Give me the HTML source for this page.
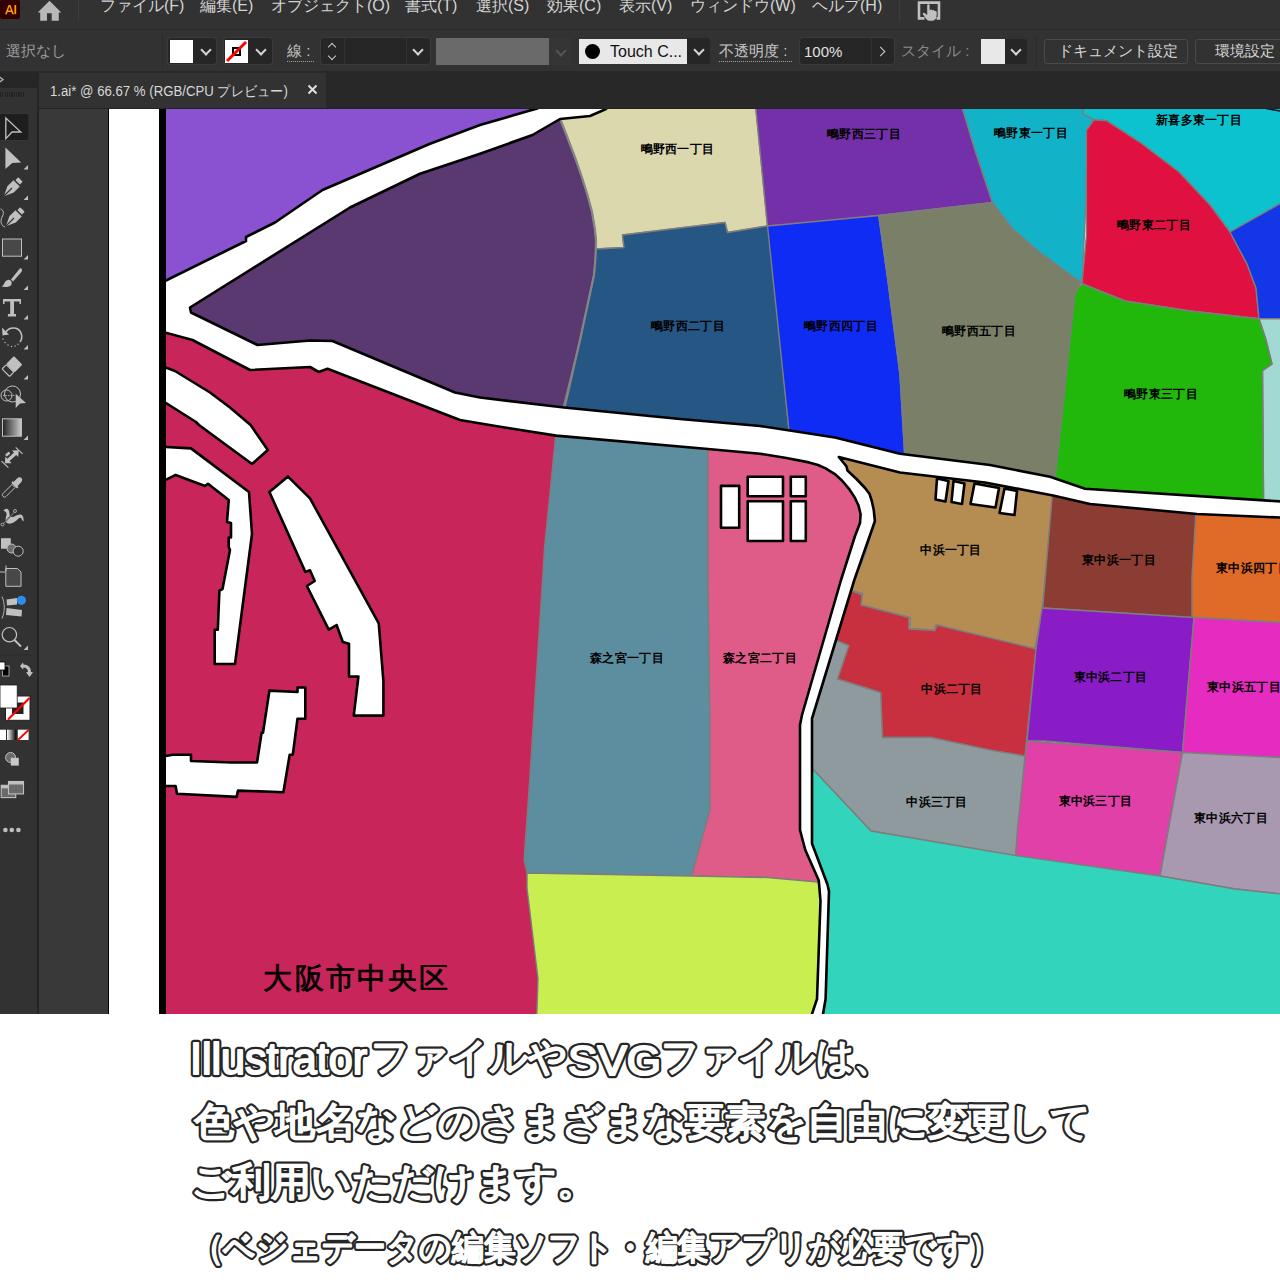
<!DOCTYPE html>
<html><head><meta charset="utf-8">
<style>
html,body{margin:0;padding:0;width:1280px;height:1280px;overflow:hidden;background:#fff;font-family:"Liberation Sans",sans-serif;}
.a{position:absolute}
.menu{position:absolute;top:-4px;font-size:16px;color:#d4d4d4;white-space:nowrap;line-height:20px}
.cb{position:absolute;font-size:15px;white-space:nowrap;line-height:18px}
.dd{position:absolute;background:#262626;border-radius:3px}
.chev{position:absolute;width:6px;height:6px;border-right:2px solid #d4d4d4;border-bottom:2px solid #d4d4d4;transform:rotate(45deg);margin-top:0.5px}
</style></head><body>
<!-- UI background -->
<div class="a" style="left:0;top:0;width:1280px;height:1014px;background:#393939"></div>
<!-- menu bar -->
<div class="a" style="left:0;top:0;width:1280px;height:29px;background:#323232"></div>
<div class="a" style="left:0;top:29px;width:1280px;height:1px;background:#2a2a2a"></div>
<!-- control bar -->
<div class="a" style="left:0;top:30px;width:1280px;height:41px;background:#323232"></div>
<div class="a" style="left:0;top:71px;width:1280px;height:2px;background:#282828"></div>
<!-- tab bar -->
<div class="a" style="left:0;top:73px;width:1280px;height:35px;background:#282828"></div>
<!-- MENUBAR_CONTENT -->
<!-- Ai logo -->
<div class="a" style="left:0;top:0;width:20px;height:19px;background:#330000;border-radius:2px"></div>
<svg class="a" style="left:0;top:0" width="20" height="19" viewBox="0 0 20 19"><path d="M5 14.2 L8.6 4.9 L10.4 4.9 L14 14.2 L12.2 14.2 L11.4 12 L7.6 12 L6.8 14.2 Z M8.1 10.4 L10.9 10.4 L9.5 6.6 Z" fill="#ff9a00"/><rect x="14.4" y="5" width="1.8" height="9.2" fill="#ff9a00"/></svg>
<!-- home -->
<svg class="a" style="left:0;top:0" width="70" height="24" viewBox="0 0 70 24"><path d="M37.7 12.6 L49.5 0.8 L61.3 12.6 L58.8 12.6 L58.8 20.8 L51.7 20.8 L51.7 13.2 L47 13.2 L47 20.8 L40.2 20.8 L40.2 12.6 Z" fill="#b8b8b8"/></svg>
<div class="a" style="left:78px;top:0;width:1px;height:21px;background:#3c3c3c"></div>
<div class="menu" style="left:100px">ファイル(F)</div>
<div class="menu" style="left:200px">編集(E)</div>
<div class="menu" style="left:271px">オブジェクト(O)</div>
<div class="menu" style="left:405px">書式(T)</div>
<div class="menu" style="left:476px">選択(S)</div>
<div class="menu" style="left:547px">効果(C)</div>
<div class="menu" style="left:619px">表示(V)</div>
<div class="menu" style="left:690px">ウィンドウ(W)</div>
<div class="menu" style="left:812px">ヘルプ(H)</div>
<div class="a" style="left:899px;top:0;width:1px;height:21px;background:#3c3c3c"></div>
<svg class="a" style="left:916px;top:0" width="26" height="24" viewBox="916 0 26 24"><path d="M924.5 18.4 L919 18.4 L919 2.6 L939 2.6 L939 18.4 L936.5 18.4" fill="none" stroke="#c0c0c0" stroke-width="2.6"/>
<path d="M927.2 5.2 C927.2 3.8 929.6 3.8 929.6 5.2 L929.6 10.5 C930.5 9 932 9.3 932.2 10.5 C933 9.5 934.5 10 934.6 11.2 C935.5 10.6 936.8 11.2 936.8 12.5 L936.5 16.5 C936.2 19 934.5 20.8 932 20.8 L929.5 20.8 C927.5 20.8 926.5 19.5 925.5 18 L922.8 14.2 C922.2 13.2 923.5 12.2 924.5 13 L927.2 15 Z" fill="#c0c0c0"/></svg>
<!-- /MENUBAR_CONTENT -->
<!-- CONTROLBAR_CONTENT -->
<div class="cb" style="left:6px;top:42px;color:#9c9c9c">選択なし</div>
<div class="a" style="left:162px;top:35px;width:1px;height:32px;background:#2a2a2a"></div>
<!-- fill -->
<div class="a" style="left:168px;top:38px;width:48px;height:26px;border-radius:3px;background:#262626;box-shadow:0 0 0 1px #3a3a3a"></div>
<div class="a" style="left:170px;top:40px;width:23px;height:23px;background:#fff"></div>
<div class="chev" style="left:202px;top:45px"></div>
<!-- stroke -->
<div class="a" style="left:224px;top:38px;width:48px;height:26px;border-radius:3px;background:#262626;box-shadow:0 0 0 1px #3a3a3a"></div>
<div class="a" style="left:225px;top:40px;width:23px;height:23px;background:#fff"></div>
<svg class="a" style="left:225px;top:40px" width="23" height="23"><rect x="8" y="8" width="7" height="7" fill="none" stroke="#000" stroke-width="2"/><line x1="2" y1="21" x2="21" y2="2" stroke="#f00" stroke-width="3"/></svg>
<div class="chev" style="left:257px;top:45px"></div>
<div class="cb" style="left:287px;top:42px;color:#c8c8c8">線 :</div>
<div class="a" style="left:287px;top:61px;width:27px;height:0;border-top:1.5px dotted #a0a0a0"></div>
<!-- stepper -->
<div class="a" style="left:321px;top:38px;width:109px;height:26px;border-radius:3px;background:#262626;box-shadow:0 0 0 1px #3a3a3a"></div>
<div class="a" style="left:344px;top:38px;width:1px;height:26px;background:#323232"></div>
<div class="a" style="left:406px;top:38px;width:1px;height:26px;background:#323232"></div>
<div class="a" style="left:329px;top:44px;width:5px;height:5px;border-left:1.5px solid #ccc;border-top:1.5px solid #ccc;transform:rotate(45deg)"></div>
<div class="a" style="left:329px;top:53px;width:5px;height:5px;border-right:1.5px solid #ccc;border-bottom:1.5px solid #ccc;transform:rotate(45deg)"></div>
<div class="chev" style="left:414px;top:45px"></div>
<!-- gray bar -->
<div class="a" style="left:436px;top:38px;width:113px;height:27px;background:#6a6a6a"></div>
<div class="a" style="left:549px;top:38px;width:22px;height:27px;background:#353535"></div>
<div class="chev" style="left:557px;top:46px;border-color:#555"></div>
<!-- touch -->
<div class="a" style="left:579px;top:39px;width:108px;height:25px;background:#e8e8e8"></div>
<div class="a" style="left:585px;top:44px;width:15px;height:15px;border-radius:50%;background:#000"></div>
<div class="cb" style="left:610px;top:43px;color:#111;font-size:16px">Touch C...</div>
<div class="a" style="left:687px;top:38px;width:23px;height:26px;background:#262626;border-radius:0 3px 3px 0"></div>
<div class="chev" style="left:695px;top:45px"></div>
<div class="cb" style="left:719px;top:42px;color:#c8c8c8">不透明度 :</div>
<div class="a" style="left:719px;top:61px;width:73px;height:0;border-top:1.5px dotted #a0a0a0"></div>
<!-- 100% -->
<div class="a" style="left:800px;top:38px;width:94px;height:26px;border-radius:3px;background:#262626;box-shadow:0 0 0 1px #3a3a3a"></div>
<div class="a" style="left:871px;top:38px;width:1px;height:26px;background:#323232"></div>
<div class="cb" style="left:804px;top:43px;color:#e0e0e0">100%</div>
<div class="a" style="left:877px;top:48px;width:6px;height:6px;border-right:1.6px solid #d0d0d0;border-top:1.6px solid #d0d0d0;transform:rotate(45deg)"></div>
<div class="cb" style="left:901px;top:42px;color:#8a8a8a">スタイル :</div>
<div class="a" style="left:981px;top:39px;width:46px;height:25px;border-radius:3px;background:#262626"></div>
<div class="a" style="left:981px;top:39px;width:24px;height:25px;background:#e8e8e8"></div>
<div class="chev" style="left:1012px;top:45px"></div>
<div class="a" style="left:1036px;top:35px;width:1px;height:32px;background:#2a2a2a"></div>
<!-- buttons -->
<div class="a" style="left:1044px;top:39px;width:142px;height:23px;border:1px solid #4a4a4a;border-radius:3px"></div>
<div class="cb" style="left:1058px;top:42px;color:#d8d8d8">ドキュメント設定</div>
<div class="a" style="left:1195px;top:39px;width:100px;height:23px;border:1px solid #4a4a4a;border-radius:3px"></div>
<div class="cb" style="left:1215px;top:42px;color:#d8d8d8">環境設定</div>
<!-- /CONTROLBAR_CONTENT -->
<!-- TABBAR_CONTENT -->
<div class="a" style="left:0;top:73px;width:37px;height:15px;background:#262626"></div>
<div class="a" style="left:0;top:88px;width:37px;height:21px;background:#323232"></div>
<div class="a" style="left:37px;top:73px;width:2px;height:36px;background:#262626"></div>
<svg class="a" style="left:0;top:76px" width="5" height="7"><path d="M-1 0.5 L3 3.5 L-1 6.5" fill="none" stroke="#b0b0b0" stroke-width="1.4"/></svg>
<div class="a" style="left:0;top:92px;width:24px;height:5px;background:repeating-linear-gradient(90deg,#222 0 1.2px,transparent 1.2px 2.3px)"></div>
<div class="a" style="left:39px;top:73px;width:287px;height:35px;background:#323232"></div>
<div class="a" style="left:39px;top:108px;width:1241px;height:1px;background:#232323"></div>
<div class="a" style="left:50px;top:82px;font-size:14px;color:#d8d8d8;line-height:18px;white-space:nowrap;transform:scaleX(0.943);transform-origin:0 0">1.ai* @ 66.67 % (RGB/CPU プレビュー)</div>
<svg class="a" style="left:307px;top:84px" width="11" height="11"><path d="M1.5 1.5 L9.5 9.5 M9.5 1.5 L1.5 9.5" stroke="#e0e0e0" stroke-width="2"/></svg>
<!-- /TABBAR_CONTENT -->
<!-- CANVAS -->
<div class="a" style="left:0;top:108px;width:37px;height:906px;background:#323232"></div>
<div class="a" style="left:37px;top:108px;width:2px;height:906px;background:#242424"></div>
<div class="a" style="left:39px;top:109px;width:69px;height:905px;background:#393939"></div>
<div class="a" style="left:108px;top:109px;width:1px;height:905px;background:#000"></div>
<div class="a" style="left:109px;top:109px;width:49.5px;height:905px;background:#fff"></div>
<div class="a" style="left:158.5px;top:109px;width:7.5px;height:905px;background:#000"></div>
<!-- TOOLBAR_CONTENT -->
<svg class="a" style="left:0;top:108px" width="37" height="740" viewBox="0 108 37 740">
<g fill="#c0c0c0" stroke="none">
<!-- selected bg -->
<rect x="-3" y="113.5" width="32" height="27" rx="2.5" fill="#1e1e1e" stroke="#3a3a3a" stroke-width="0.8"/>
<!-- selection outline arrow -->
<path d="M5.8 118 L20.8 132 L12 132 L5.8 138.6 Z" fill="none" stroke="#c0c0c0" stroke-width="1.3" stroke-linejoin="miter"/>
<!-- direct selection -->
<path d="M5.4 147.4 L21.2 162.6 L12.3 163 L5.4 169 Z"/>
<path d="M23.6 169.5 L28 165 L28 169.5 Z"/>
<!-- pen -->
<g transform="rotate(45 12 188)">
<rect x="8.8" y="176" width="6.4" height="4" rx="0.8"/>
<path d="M7.5 181.5 L16.5 181.5 L16.5 190 L12 199.5 L7.5 190 Z"/>
<path d="M12 188 L12 199" stroke="#323232" stroke-width="1.2"/>
</g>
<path d="M23.6 200 L28 195.6 L28 200 Z"/>
<!-- curvature pen -->
<g transform="rotate(45 14 218)">
<rect x="10.8" y="206" width="6.4" height="4" rx="0.8"/>
<path d="M9.5 211.5 L18.5 211.5 L18.5 220 L14 229.5 L9.5 220 Z"/>
<path d="M14 218 L14 229" stroke="#323232" stroke-width="1.2"/>
</g>
<path d="M0.5 209 C4 210 4 214 2 217 C0 221 1 226 5 227" fill="none" stroke="#c0c0c0" stroke-width="1"/>
<!-- rect -->
<rect x="2.5" y="239" width="19" height="17.2" fill="#484848" stroke="#c0c0c0" stroke-width="1"/>
<path d="M23.6 259.5 L28 255 L28 259.5 Z"/>
<!-- brush -->
<path d="M21.2 268.5 C22.5 269.5 22.2 271 21 272.5 L13 281.5 L11 279.5 L19 269.5 C19.7 268.6 20.5 268 21.2 268.5 Z"/>
<path d="M10.3 280.2 C12.5 282 12.2 285.5 9 286.5 C6 287.3 3 287 1.5 286.6 C3.5 285.5 4 283.5 5 282 C6.3 280 8.5 279 10.3 280.2 Z"/>
<path d="M23.6 290 L28 285.6 L28 290 Z"/>
<!-- type -->
<path d="M3 299 L21 299 L21 304 L19.5 304 L19.5 301.5 L14 301.5 L14 314 L16 314 L16 316.6 L7.9 316.6 L7.9 314 L10.2 314 L10.2 301.5 L4.5 301.5 L4.5 304 L3 304 Z"/>
<path d="M23.6 319.5 L28 315 L28 319.5 Z"/>
<!-- rotate -->
<path d="M6 332 C9 327 18 326 21 333 C22.5 337 21.5 340 20 342" fill="none" stroke="#c0c0c0" stroke-width="1.6"/>
<path d="M2 327.5 L9 334.5 L2.5 335.5 Z"/>
<g fill="#c0c0c0"><circle cx="3" cy="339" r="0.7"/><circle cx="5" cy="342.5" r="0.7"/><circle cx="8" cy="345" r="0.7"/><circle cx="11.5" cy="346.5" r="0.7"/><circle cx="15" cy="346" r="0.7"/><circle cx="18" cy="344.3" r="0.7"/></g>
<path d="M23.6 349.5 L28 345 L28 349.5 Z"/>
<!-- eraser -->
<g transform="rotate(45 12.5 366)">
<rect x="6.5" y="358" width="12" height="11" rx="1"/>
<rect x="7.2" y="369.5" width="10.6" height="6" rx="1" fill="none" stroke="#c0c0c0" stroke-width="1.2"/>
</g>
<path d="M23.6 379.5 L28 375 L28 379.5 Z"/>
<!-- shape builder -->
<circle cx="6.5" cy="395.5" r="5.5" fill="none" stroke="#c0c0c0" stroke-width="1"/>
<circle cx="12.5" cy="394" r="8" fill="none" stroke="#c0c0c0" stroke-width="1"/>
<path d="M3 395.5 L15 395.5" stroke="#c0c0c0" stroke-width="0.8" stroke-dasharray="1.5 1"/>
<path d="M15.7 393.8 L26 403 L20 403.5 L15.7 408 Z"/>
<!-- gradient -->
<defs><linearGradient id="tg" x1="0" x2="1"><stop offset="0" stop-color="#222"/><stop offset="1" stop-color="#ccc"/></linearGradient>
<linearGradient id="tg2" x1="0" x2="1"><stop offset="0" stop-color="#fff"/><stop offset="1" stop-color="#000"/></linearGradient></defs>
<rect x="2.5" y="418.8" width="19" height="17.4" fill="url(#tg)" stroke="#c0c0c0" stroke-width="1"/>
<path d="M23.6 440 L28 435.5 L28 440 Z"/>
<!-- measure -->
<path d="M1.5 461.2 L8.4 467.6 M15.7 447.4 L22.6 453.8" stroke="#c0c0c0" stroke-width="1.1"/>
<g transform="rotate(-43 11.8 456.8)">
<path d="M2.3 456.8 L7.3 452.3 L7.3 455.2 L16.3 455.2 L16.3 452.3 L21.3 456.8 L16.3 461.3 L16.3 458.4 L7.3 458.4 L7.3 461.3 Z"/>
</g>
<rect x="5.2" y="452.8" width="5" height="2.6" rx="1" transform="rotate(-40 7.7 454.1)"/>
<!-- eyedropper -->
<path d="M4 497 C2 496 2 494.5 3 493.5 L12 484.5 L15 487.5 L6 496.5 C5.5 497 4.8 497.4 4 497 Z" fill="none" stroke="#c0c0c0" stroke-width="1"/>
<path d="M11.5 483 L17 488.5 L18.5 487 L17.5 486 L21 482.5 C22.5 481 22.5 479 21.5 478 C20.5 477 18.5 477 17 478.5 L13.5 482 L12.5 481 Z"/>
<!-- blend/puppet -->
<path d="M3.5 511 C5 508 8 508 9 511 C10 514 9 517 12 517 C15 517 17 514 20.5 514.5 C23 515 24 518 23.5 521.5 L22 520 C21.5 517 19.5 517.5 18 519 C15 522.5 10 525 7 523 C4.5 521.5 6 517 6.5 515 C7 513 5.5 511 3.5 511 Z"/>
<path d="M2.5 524.5 L15 511.5" stroke="#323232" stroke-width="1.2"/>
<path d="M2.5 524.5 L15 511.5" stroke="#c0c0c0" stroke-width="0.6"/>
<circle cx="2.5" cy="524.5" r="1.5" fill="#323232" stroke="#c0c0c0" stroke-width="0.8"/>
<circle cx="15" cy="511" r="1.5" fill="#323232" stroke="#c0c0c0" stroke-width="0.8"/>
<!-- shapes -->
<rect x="1" y="538.2" width="9.8" height="10.5"/>
<circle cx="11.5" cy="548.5" r="4.5" fill="#6f6f6f" stroke="#c0c0c0" stroke-width="1"/>
<circle cx="18.2" cy="551.2" r="5" fill="#323232" stroke="#c0c0c0" stroke-width="1"/>
<!-- artboard -->
<path d="M5.8 568.5 L17.5 568.5 L21 572 L21 586.3 L5.8 586.3 Z" fill="#484848" stroke="#c0c0c0" stroke-width="1"/>
<path d="M6 565.5 L6 571 M0 572 L5 572" stroke="#c0c0c0" stroke-width="1"/>
<!-- puppet warp -->
<path d="M2 596.5 C5 603 5 612 2 618.5" fill="none" stroke="#c0c0c0" stroke-width="0.9"/>
<path d="M6.5 599.5 L17 598 L17 604.5 L7 605.5 Z"/>
<path d="M6.5 608 L22 610 L21.5 616.5 L6 615 Z"/>
<circle cx="21.4" cy="600.3" r="4.6" fill="#2d8ceb"/>
<!-- zoom -->
<circle cx="9.4" cy="634.7" r="7.2" fill="none" stroke="#c0c0c0" stroke-width="1.2"/>
<path d="M14.5 640 L21 646.5" stroke="#c0c0c0" stroke-width="2"/>
<path d="M23.6 650 L28 645.5 L28 650 Z"/>
<rect x="0" y="654.5" width="31" height="0.8" fill="#2a2a2a"/>
<!-- default colors -->
<rect x="2.5" y="666" width="6.5" height="10" fill="#000" stroke="#c0c0c0" stroke-width="0.8"/>
<rect x="-1" y="662" width="6" height="8" fill="#fff" stroke="#000" stroke-width="0.8"/>
<!-- swap arrow -->
<path d="M20 666 L23 662.5 L23.5 664.5 C28 664.5 31 667.5 31 672 L33 672.3 L29.5 677 L26 672.3 L28 672 C28 669 26 667.5 23.5 667.5 L23 669.5 Z"/>
<!-- fill/stroke swatches -->
<rect x="5.5" y="696" width="24.5" height="24.3" fill="#fff" stroke="#1e1e1e" stroke-width="1"/>
<rect x="12" y="702.5" width="11.5" height="11.5" fill="#222"/>
<rect x="0" y="685" width="17.2" height="23" fill="#fff" stroke="#1e1e1e" stroke-width="0.8"/>
<path d="M8 719.5 L29.5 698" stroke="#f00" stroke-width="2.2"/>
<!-- color modes -->
<rect x="0" y="729.7" width="6" height="10.3" fill="#fff"/>
<rect x="7" y="729.7" width="9.3" height="10.3" fill="url(#tg2)"/>
<rect x="17.8" y="729.7" width="10.8" height="10.3" fill="#fff"/>
<path d="M18 740 L28.5 730" stroke="#f00" stroke-width="1.8"/>
<!-- draw modes -->
<circle cx="10.6" cy="757.5" r="5" fill="#6a6a6a" stroke="#c0c0c0" stroke-width="1"/>
<rect x="10.8" y="757.8" width="8" height="7.8" fill="#c8c8c8"/>
<!-- screen mode -->
<rect x="1.2" y="785.3" width="14.5" height="12.3" fill="#6a6a6a" stroke="#c0c0c0" stroke-width="1.1"/>
<rect x="1.2" y="785.3" width="14.5" height="3" fill="#c0c0c0"/>
<rect x="8.5" y="781.5" width="15" height="12.4" fill="#6a6a6a" stroke="#c0c0c0" stroke-width="1.1"/>
<rect x="8.5" y="781.5" width="15" height="3" fill="#c0c0c0"/>
<!-- more -->
<circle cx="5.4" cy="830" r="2.3"/><circle cx="11.8" cy="830" r="2.3"/><circle cx="18.4" cy="830" r="2.3"/>
</g>
</svg>
<!-- /TOOLBAR_CONTENT -->
<!-- MAP -->
<svg class="a" style="left:0;top:0" width="1280" height="1014" viewBox="0 0 1280 1014">
<defs><clipPath id="mc"><rect x="166" y="109" width="1114" height="905"/></clipPath></defs>
<g clip-path="url(#mc)">
<rect x="166" y="109" width="1114" height="905" fill="#fff"/>
<g stroke="#7d7d7d" stroke-width="1.4" stroke-linejoin="round">
<!-- purple TL -->
<polygon fill="#8a52d0" stroke="none" points="160,100 560,100 165,300"/>
<!-- dark purple -->
<polygon fill="#5a3870" points="185,310 350,207 420,173 480,153 532,135 561,119 561,121 568,139 575,157.5 581.5,176 587.5,195 592,212 595,230 596,240 595.5,258 594,275 580,340 564,410 455,395 332,343 257,350"/>
<!-- beige -->
<polygon fill="#dcd8ae" points="561,100 755,100 767.5,226 727.5,232.5 725,222.5 622.5,235 624,247.5 596,249 596,240 595,230 592,212 587.5,195 581.5,176 575,157.5 568,139 561,121"/>
<!-- dark blue -->
<polygon fill="#265684" points="596,249 624,247.5 622.5,235 725,222.5 727.5,232.5 767.5,226 769,226 790,440 560,420 580,340 594,275"/>
<!-- purple 西三 -->
<polygon fill="#7430a8" points="755,100 960,100 975,150 992.5,202.5 878.75,215.5 800,223.75 767.5,226"/>
<!-- blue 西四 -->
<polygon fill="#0f2cf5" points="767.5,226 878.75,215.5 887.5,277.5 900,375 905,460 790,440"/>
<!-- gray-green 西五 -->
<polygon fill="#7a8068" points="878.75,215.5 992.5,202.5 1012.5,228.75 1040,252.5 1081,282.5 1075,292.5 1056,480 1000,470 905,460 900,375 887.5,277.5"/>
<!-- cyan 東一 -->
<polygon fill="#12b3c9" points="960,100 1083.75,100 1083,114 1094,119.7 1087.5,130 1086,200 1082.5,275 1081,282.5 1040,252.5 1012.5,228.75 992.5,202.5 975,150"/>
<!-- light cyan 新喜多 -->
<polygon fill="#0cc2cf" points="1083,100 1290,100 1290,198 1230,232 1210,205 1179,172 1142,143.75 1107,120.8 1094,119.7 1083,114"/>
<!-- red 東二 -->
<polygon fill="#e01040" points="1094,119.7 1107,120.8 1142,143.75 1179,172 1210,205 1230,232 1247,264 1256,288 1259,318.75 1190,311 1125,301 1082,283.75 1086.4,235.6 1086.4,130.6"/>
<!-- blue right -->
<polygon fill="#1336e6" points="1230,232 1290,198 1290,318.75 1259,318.75 1256,288 1247,264"/>
<!-- light teal -->
<polygon fill="#a3d9d3" points="1259,318.75 1290,318.75 1290,510 1263.6,505 1262.5,370.6 1272,364 1266,340"/>
<!-- green 東三 -->
<polygon fill="#22b70b" points="1082,283.75 1125,301 1190,311 1259,318.75 1266,340 1272,364 1262.5,370.6 1263.6,505 1085,495 1055,480 1075,292.5"/>
<!-- crimson -->
<polygon fill="#c8255a" stroke="none" points="160,330 192.5,340 250,370 310,367 318.75,372 327.5,368.75 460,420 556,435.6 620,440 620,1020 160,1020"/>
<!-- teal-blue 森之宮一 -->
<polygon fill="#5c8ea0" points="556,432 708,445 708,578 710,720 710,810 691.6,876 527,873 524,860 529.7,780 544.5,548"/>
<!-- pink 森之宮二 -->
<polygon fill="#e05c88" points="708,445 760,450 810,458 840,470 860,495 866,525 845,575 827.5,637.5 806,720 806,832.5 822,883 767.5,877.5 691.6,876 710,810 710,720 708,578"/>
<!-- yellow-green -->
<polygon fill="#c8ee50" points="527,873 691.6,876 767.5,877.5 818,882 824,900 821,1001 818,1020 536.6,1020 538,978.75 527,888"/>
<!-- tan 中浜一 -->
<polygon fill="#b58c52" points="838,455 900,470 985,480 1053,493 1052.5,496 1042.5,607.5 1035,648.75 936,625 935,630 910,628.75 910,617.5 861,605 862.5,593.75 850,590 865,555 873.75,525 872.5,507.5 865,487.5 850,472.5"/>
<!-- brown 東中浜一 -->
<polygon fill="#8b3d33" points="1052.5,493 1090,500 1197,510 1198,515 1193.6,576 1193.6,617.8 1042.7,608"/>
<!-- orange 東中浜四 -->
<polygon fill="#e06a28" points="1196,510 1290,515 1290,623 1192,617.5 1192,576"/>
<!-- red 中浜二 -->
<polygon fill="#c83040" points="850,590 862,595 861,605 909,617.5 909,629 935,630.6 937,625 1036,649 1025,756 993,750.6 931,737.5 882.5,737.5 880.6,692.5 837.5,679 848.75,645.6 835,640"/>
<!-- gray 中浜三 -->
<polygon fill="#8e9a9e" points="835,640 848.75,645.6 837.5,679 880.6,692.5 882.5,737.5 931,737.5 993,750.6 1025,756 1015.6,855.6 871,831 808,764 808,719"/>
<!-- purple 東中浜二 -->
<polygon fill="#8a1cc8" points="1042,608 1194,617.5 1182.5,752.5 1044,741 1027,741 1036,649"/>
<!-- magenta 東中浜五 -->
<polygon fill="#e62cc0" points="1194,617.5 1290,623 1290,758 1182.5,752.5"/>
<!-- pink-magenta 東中浜三 -->
<polygon fill="#e040a8" points="1027,741 1182.5,752.5 1160,876 1015.6,855.6 1017.5,829"/>
<!-- lavender 東中浜六 -->
<polygon fill="#a898b0" points="1182.5,752.5 1290,758 1290,895 1235,889 1160,876"/>
<!-- teal bottom -->
<polygon fill="#32d4bc" points="808,764 871,831 1015.6,855.6 1160,876 1235,889 1290,895 1290,1020 818,1020 822,1001 826.6,900 828,886 811,846.6"/>
</g>
<polyline fill="none" stroke="#858585" stroke-width="2.2" points="561,121 568,139 575,157.5 581.5,176 587.5,195 592,212 595,230 596,240 595.5,258 594,275 580,340 564,410"/>
<!-- roads / rivers -->
<g fill="#fff" stroke="#000" stroke-width="2.6" stroke-linejoin="round">
<polygon points="150,288 165,281 246,241 246,237 275,222.5 322.5,190 430,143.75 480,125 530,110.5 537.5,108.5 545,100 614,100 606,109 590,116 560,119 532.5,135 480,153.75 420,173.75 350,207.5 190,307.5 191,312.5 257.5,345 310,340.5 332.5,341 455,392.5 480,397.5 564,407.5 680,419 760,426 835,437.5 900,453.75 990,465 1050,476.7 1085,488.75 1290,502 1290,518 1197,514 1090,504 1053,495.5 985,482.5 900,472.5 838.8,457 846.4,466.3 847.5,470.6 856.5,479 865,488 869.4,493.6 871.8,501 873.75,510 874.9,521 872.7,527.5 854.3,580 836,640 812,718.5 812,843.5 827.3,884 829,891 825.6,999 822,1020 810,1020 817,999 820.5,901 818.8,880.6 805.3,850 800,830 800,725 802,715 841,580 855,536 860,523 860.6,514.4 858.5,505.5 855,498 849,488.8 842,480.5 834.5,473.8 825.6,468.4 818,465 809,462.4 785,457.8 760,453.7 708,449 556,435.6 500,426.7 460,420 327.5,368.75 318.75,372 310,367 250,370 192.5,340 165,332.5 150,330"/>
<!-- river A -->
<polygon points="150,367 165.5,367.5 175,371 210,392.5 230,407.5 250.6,425 267.8,450 252,464 199,425 196,422 166,403 150,403"/>
<!-- river B -->
<polygon points="150,447 166,447 191,448.4 249,492 252,534 235,664 214.7,664 214.7,629.7 217.8,629.7 219.4,590.6 222.5,589 230,550 228.75,547 228.75,537.5 231,537.5 231,523 227,522 228.75,500 208,483.75 205,486 175.6,475 166,479.7 150,480"/>
<!-- river C -->
<polygon points="269.4,492 288,476.6 310,498.4 378.75,623.4 383.4,681 383.4,715.6 353.75,715.6 358.4,676.6 349,676.6 349,643.75 342.8,642 336.6,625 328.75,629.7 306.9,586 314.7,581 310,570.3 305.3,571.9"/>
<!-- river D -->
<polygon points="150,756 166,756 172.5,754.7 191,754.7 191,761 231.9,762.5 257,762.5 261.6,732.8 263,732.8 269.4,690.6 297.5,692 297.5,687.5 305.3,687.5 305.3,718.75 297.5,718.75 292.8,754.7 289.7,754.7 283.4,792.2 238,790.6 236.6,796.9 177,793.75 175.6,786 150,786"/>
<!-- buildings pink -->
<rect x="721" y="485.9" width="18.2" height="41.8"/>
<rect x="747.7" y="476.8" width="35.3" height="19.4"/>
<rect x="790.8" y="476.8" width="15" height="19.4"/>
<rect x="747.7" y="501.3" width="35.3" height="39.7"/>
<rect x="790.8" y="501.3" width="15" height="39.7"/>
<!-- buildings tan -->
<polygon points="937,478.5 948.5,481 945.5,501.5 935.5,499.5"/>
<polygon points="953.5,481 964.5,483.5 962,504 951.5,502"/>
<polygon points="974.5,483.5 999,488 995.5,507.5 970.5,504"/>
<polygon points="1004.5,488.5 1017,491 1014.5,515 999.5,513"/>
</g>
<path d="M1266 108.5 L1280 111" stroke="#112" stroke-width="1.5" fill="none"/>
<!-- labels -->
<g font-family="Liberation Sans, sans-serif" font-size="12" font-weight="bold" fill="#000" text-anchor="middle" letter-spacing="0.3">
<text x="677.5" y="153">鴫野西一丁目</text>
<text x="864" y="138">鴫野西三丁目</text>
<text x="1031" y="137">鴫野東一丁目</text>
<text x="1199" y="124">新喜多東一丁目</text>
<text x="1154" y="229">鴫野東二丁目</text>
<text x="688" y="330">鴫野西二丁目</text>
<text x="841" y="330">鴫野西四丁目</text>
<text x="979" y="335">鴫野西五丁目</text>
<text x="1161" y="398">鴫野東三丁目</text>
<text x="951" y="554">中浜一丁目</text>
<text x="1119" y="564">東中浜一丁目</text>
<text x="1253" y="572">東中浜四丁目</text>
<text x="627" y="662">森之宮一丁目</text>
<text x="760" y="662">森之宮二丁目</text>
<text x="952" y="693">中浜二丁目</text>
<text x="1110.5" y="681">東中浜二丁目</text>
<text x="1244" y="691">東中浜五丁目</text>
<text x="937" y="806">中浜三丁目</text>
<text x="1095.5" y="805">東中浜三丁目</text>
<text x="1231" y="822">東中浜六丁目</text>
</g>
<text x="357" y="987.5" font-family="Liberation Sans, sans-serif" font-size="28.5" fill="#000" stroke="#000" stroke-width="0.7" text-anchor="middle" letter-spacing="2.2">大阪市中央区</text>
</g>
</svg>
<!-- /MAP -->
<!-- BOTTOMTEXT -->
<svg class="a" style="left:0;top:1014px" width="1280" height="266" viewBox="0 1014 1280 266">
<g font-family="Liberation Sans, sans-serif" stroke-linejoin="round">
<g fill="#262626" stroke="#262626" stroke-width="6.5">
<text x="190" y="1074" font-size="44" textLength="177.0" lengthAdjust="spacingAndGlyphs">Illustrator</text>
<text x="371" y="1070" font-size="39" textLength="196.0" lengthAdjust="spacingAndGlyphs">ファイルや</text>
<text x="568" y="1075" font-size="42" textLength="93.1" lengthAdjust="spacingAndGlyphs">SVG</text>
<text x="660.5" y="1070" font-size="39" textLength="231.6" lengthAdjust="spacingAndGlyphs">ファイルは、</text>
<text x="194" y="1134.5" font-size="39" textLength="897.0" lengthAdjust="spacingAndGlyphs">色や地名などのさまざまな要素を自由に変更して</text>
<text x="190.5" y="1195" font-size="39" textLength="406.8" lengthAdjust="spacingAndGlyphs">ご利用いただけます。</text>
<text x="191.5" y="1258.5" font-size="34" textLength="809.8" lengthAdjust="spacingAndGlyphs">（ベジェデータの編集ソフト・編集アプリが必要です）</text>
</g>
<g fill="#fff" stroke="#fff" stroke-width="2">
<text x="190" y="1074" font-size="44" textLength="177.0" lengthAdjust="spacingAndGlyphs">Illustrator</text>
<text x="371" y="1070" font-size="39" textLength="196.0" lengthAdjust="spacingAndGlyphs">ファイルや</text>
<text x="568" y="1075" font-size="42" textLength="93.1" lengthAdjust="spacingAndGlyphs">SVG</text>
<text x="660.5" y="1070" font-size="39" textLength="231.6" lengthAdjust="spacingAndGlyphs">ファイルは、</text>
<text x="194" y="1134.5" font-size="39" textLength="897.0" lengthAdjust="spacingAndGlyphs">色や地名などのさまざまな要素を自由に変更して</text>
<text x="190.5" y="1195" font-size="39" textLength="406.8" lengthAdjust="spacingAndGlyphs">ご利用いただけます。</text>
<text x="191.5" y="1258.5" font-size="34" textLength="809.8" lengthAdjust="spacingAndGlyphs">（ベジェデータの編集ソフト・編集アプリが必要です）</text>
</g>
</g>
</svg>
<!-- /BOTTOMTEXT -->
</body></html>
